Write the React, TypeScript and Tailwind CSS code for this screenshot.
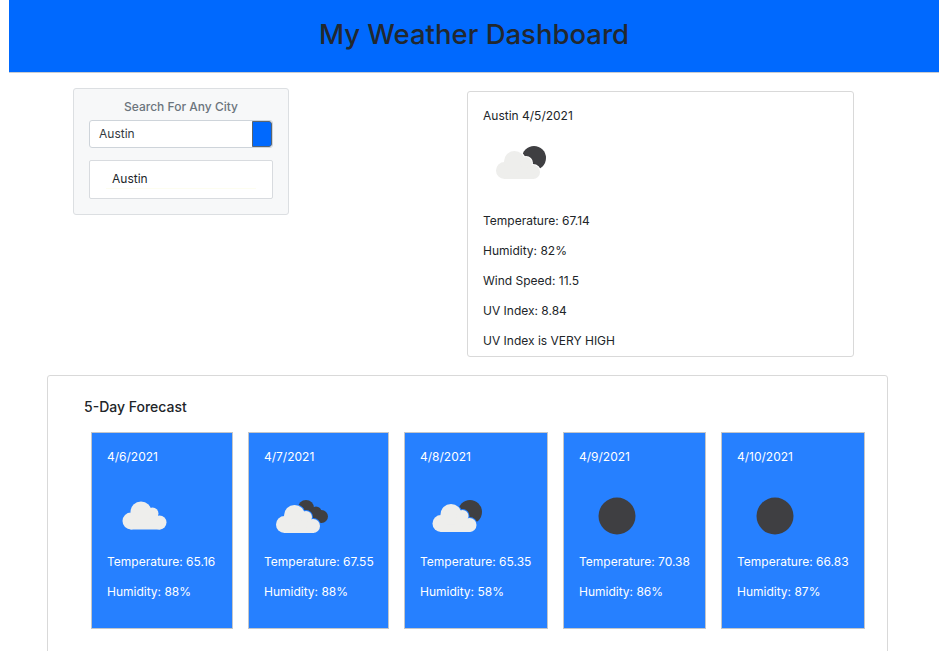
const days = [
  { date: '4/6/2021', temp: '65.16', humidity: '88%', icon: 'cloud', width: 'w-[142px]' },
  { date: '4/7/2021', temp: '67.55', humidity: '88%', icon: 'broken', width: 'w-[141px]' },
  { date: '4/8/2021', temp: '65.35', humidity: '58%', icon: 'few', width: 'w-[144px]' },
  { date: '4/9/2021', temp: '70.38', humidity: '86%', icon: 'sun', width: 'w-[143px]' },
  { date: '4/10/2021', temp: '66.83', humidity: '87%', icon: 'sun', width: 'w-[144px]' },
];

// same shapes for the cloud and for the gap cut around it
function CloudShape({ x, y, fill, halo }: { x: number; y: number; fill: string; halo?: boolean }) {
  const extra = halo ? { stroke: fill, strokeWidth: 2 } : {};
  return (
    <g transform={`translate(${x} ${y})`} fill={fill} {...extra}>
      <circle cx="8.5" cy="19.5" r="8.5" />
      <rect x="8" y="15" width="30" height="13" />
      <circle cx="18.5" cy="10.5" r="10.5" />
      <circle cx="30" cy="12" r="6" />
      <circle cx="37" cy="21" r="7" />
    </g>
  );
}

function WeatherIcon({ kind, bg }: { kind: string; bg: string }) {
  const white = '#eeeeec';
  const dark = '#3f3f42';
  return (
    <svg width="90" height="75" viewBox="0 0 90 75" className="block">
      {kind === 'cloud' && <CloudShape x={15.5} y={22.5} fill={white} />}
      {kind === 'broken' && (
        <>
          <circle cx="42" cy="29" r="8" fill={dark} />
          <circle cx="52" cy="33" r="5.5" fill={dark} />
          <circle cx="57.5" cy="37.5" r="6.5" fill={dark} />
          <rect x="42" y="34" width="16" height="10" fill={dark} />
          <CloudShape x={12} y={26} fill={bg} halo />
          <CloudShape x={12} y={26} fill={white} />
        </>
      )}
      {kind === 'few' && (
        <>
          <circle cx="50" cy="33" r="12" fill={dark} />
          <CloudShape x={12.5} y={25} fill={bg} halo />
          <CloudShape x={12.5} y={25} fill={white} />
        </>
      )}
      {kind === 'sun' && <circle cx="38" cy="37" r="18.5" fill={dark} />}
    </svg>
  );
}

export default function App() {
  return (
    <div className="h-[651px] overflow-hidden bg-white text-[12px] leading-[15px] text-[#212529] font-['Inter','Liberation_Sans',sans-serif]">
      <header className="ml-[9px] w-[930px] h-[73px] flex items-center justify-center bg-[#0069fe] border-b border-[#c9ccd1]">
        <h1 className="text-[27.5px] leading-[34px] font-medium text-[#22282f] -mt-[5px]">My Weather Dashboard</h1>
      </header>

      <div className="flex items-start pl-[73px] pt-[15px]">
        <section className="w-[216px] h-[127px] bg-[#f7f8f9] border border-[#dcdfe2] rounded-[3px] px-[15px] pt-[10px]">
          <p className="text-center font-medium text-[#6c757d]">Search For Any City</p>
          <div className="mt-[6px] flex h-[28px] bg-white border border-[#ced4da] rounded-[3px] overflow-hidden">
            <span className="flex-1 pl-[9px] leading-[26px] text-[#343a40]">Austin</span>
            <span className="w-[20px] bg-[#0069fe] border border-[#5a6570] rounded-r-[3px]" />
          </div>
          <div className="mt-3 h-[39px] bg-white border border-[#d8dbdf] rounded-[2px] px-4 pt-[10px]">
            <p className="pl-[6px] pb-[2px] border-b border-[#fdfdf0]">Austin</p>
          </div>
        </section>

        <section className="ml-[178px] mt-[3px] w-[387px] h-[266px] border border-[#d9d9d9] rounded-[3px] px-[15px] pt-[16px] overflow-hidden">
          <p className="mb-[15px]">Austin 4/5/2021</p>
          <svg width="90" height="75" viewBox="0 0 90 75" className="block">
            <circle cx="51" cy="20" r="12" fill="#3f3f42" />
            <CloudShape x={13} y={13} fill="#ffffff" halo />
            <CloudShape x={13} y={13} fill="#eeeeec" />
          </svg>
          <p className="mb-[15px]">Temperature: 67.14</p>
          <p className="mb-[15px]">Humidity: 82%</p>
          <p className="mb-[15px]">Wind Speed: 11.5</p>
          <p className="mb-[15px]">UV Index: 8.84</p>
          <p>UV Index is VERY HIGH</p>
        </section>
      </div>

      <section className="ml-[47px] mt-[18px] w-[841px] h-[320px] border border-[#d9d9d9] rounded-[3px] pl-[36px] pt-[22px]">
        <h2 className="text-[14px] leading-[17px] font-medium">5-Day Forecast</h2>
        <div className="mt-[17px] ml-[7px] flex gap-[15px]">
          {days.map((day) => (
            <article
              key={day.date}
              className={`${day.width} h-[197px] shrink-0 bg-[#2680ff] border border-[#c4c6c9] px-[15px] pt-[16px] text-white`}
            >
              <p className="mb-[15px]">{day.date}</p>
              <WeatherIcon kind={day.icon} bg="#2680ff" />
              <p className="mb-[15px] whitespace-nowrap">Temperature: {day.temp}</p>
              <p>Humidity: {day.humidity}</p>
            </article>
          ))}
        </div>
      </section>
    </div>
  );
}
